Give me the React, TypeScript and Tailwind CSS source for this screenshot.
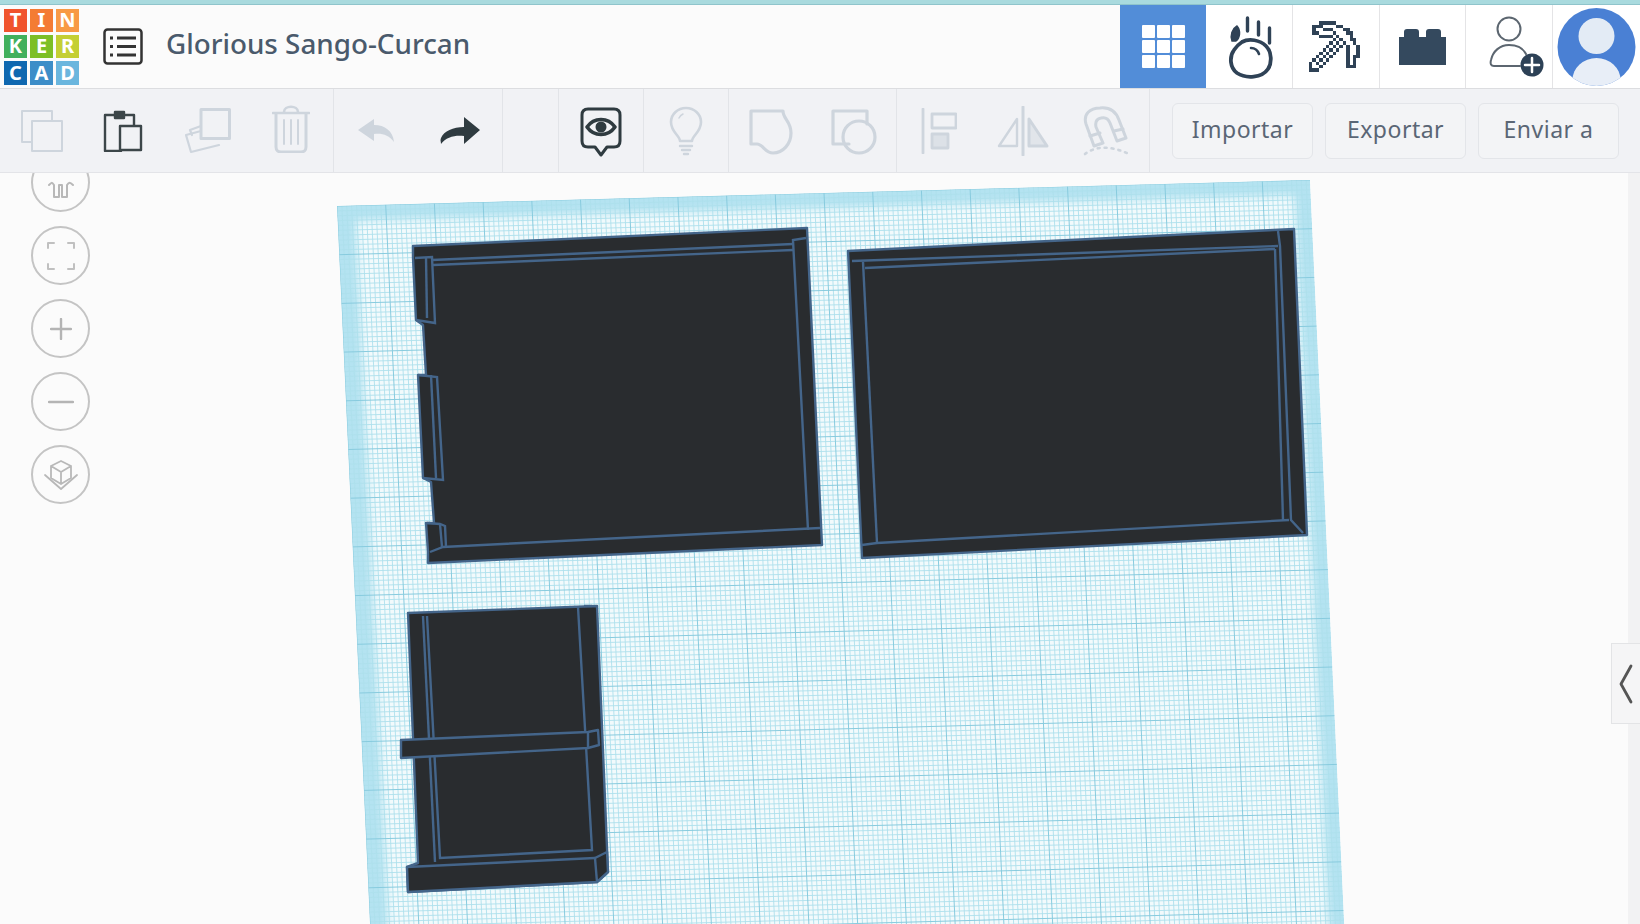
import type { ReactNode } from "react"

const gray = "#ced5dd"
const dark = "#2f3b40"

const logo = [
  ["T", "bg-[#f0532c]"],
  ["I", "bg-[#f47c33]"],
  ["N", "bg-[#f89a45]"],
  ["K", "bg-[#41b05c]"],
  ["E", "bg-[#7dbf26]"],
  ["R", "bg-[#c4cf33]"],
  ["C", "bg-[#0f68b0]"],
  ["A", "bg-[#3d8ec8]"],
  ["D", "bg-[#6ab6de]"],
]

const pickaxe = [
  "...#####........",
  ".###....##......",
  ".#..###...##....",
  ".##....#...##...",
  "...####.#...#...",
  ".......#.#..##..",
  "......#.#.#..#..",
  ".....#.#.#.#..#.",
  "....#.#.#..#..#.",
  "...#.#.#...#..#.",
  "..#.#.#....#.##.",
  ".#.#.#.....#.#..",
  "#.#.#......#.#..",
  "#..#.......###..",
  "###.............",
]

function Icon({ w, h, children, color = gray, sw = 2.5 }: { w: number; h: number; children: ReactNode; color?: string; sw?: number }) {
  return (
    <svg width={w} height={h} viewBox={`0 0 ${w} ${h}`} fill="none" stroke={color} strokeWidth={sw} strokeLinecap="round" strokeLinejoin="round">
      {children}
    </svg>
  )
}

function ToolButton({ children }: { children: ReactNode }) {
  return <button className="flex h-full flex-1 items-center justify-center">{children}</button>
}

function NavCircle({ children }: { children: ReactNode }) {
  return (
    <button className="flex h-[59px] w-[59px] items-center justify-center rounded-full border-2 border-[#c4c4c4] bg-[#fbfbfb]">
      {children}
    </button>
  )
}

function ActionButton({ label }: { label: string }) {
  return (
    <button className="h-[56px] w-[141px] rounded-md border border-[#e3e5e9] bg-[#f3f4f6] pb-[3px] text-[23px] tracking-[0.5px] text-[#5a6675]">
      {label}
    </button>
  )
}

function Workplane() {
  // plate is an affine quad: origin, width vector, height vector
  const ox = 337
  const oy = 206
  const ux = 1
  const uy = -26 / 973
  const vx = 0.046
  const vy = 1
  const pt = (a: number, b: number) => `${ox + ux * a + vx * b},${oy + uy * a + vy * b}`
  const W = 973
  const H = 780
  const minor: string[] = []
  const major: string[] = []
  const step = 4.87
  for (let i = 0; i * step <= W; i++) {
    const d = `M${pt(i * step, 0)}L${pt(i * step, H)}`
    if (i % 10 === 0) major.push(d)
    else minor.push(d)
  }
  for (let i = 0; i * step <= H; i++) {
    const d = `M${pt(0, i * step)}L${pt(W, i * step)}`
    if (i % 10 === 0) major.push(d)
    else minor.push(d)
  }
  const body = { fill: "#292c2f", stroke: "#44658a", strokeWidth: 2.4, strokeLinejoin: "round" as const }
  const line = { fill: "none", stroke: "#44658a", strokeWidth: 2.4 }

  return (
    <svg className="absolute inset-0 blur-[0.6px]" width="1640" height="751" viewBox="0 173 1640 751">
      <defs>
        <clipPath id="plate-clip">
          <polygon points={`${pt(0, 0)} ${pt(W, 0)} ${pt(W, H)} ${pt(0, H)}`} />
        </clipPath>
      </defs>
      <g clipPath="url(#plate-clip)">
        <polygon points={`${pt(0, 0)} ${pt(W, 0)} ${pt(W, H)} ${pt(0, H)}`} fill="#b4e3f1" />
        <polygon className="blur-[4px]" points={`${pt(18, 15)} ${pt(W - 16, 15)} ${pt(W - 16, H)} ${pt(18, H)}`} fill="#f2fafc" />
        <path d={minor.join("")} stroke="#aee0ec" strokeWidth="0.9" fill="none" />
        <path d={major.join("")} stroke="#88cbde" strokeWidth="1" fill="none" />
      </g>

      {/* tray with tabs */}
      <polygon {...body} points="413,246 807,228 822,545 428,563 428,552 426,523 434,523 431,482 423,478 418,375 426,375 423,325 416,320 413,258" />
      <line {...line} x1="432" y1="260" x2="793" y2="244" />
      <line {...line} x1="433" y1="265" x2="793" y2="250" />
      <polyline {...line} points="806,238 793,240 808,530" />
      <polyline {...line} points="415,258 432,257 435,323 416,320" />
      <line {...line} x1="426" y1="257" x2="427" y2="318" />
      <polyline {...line} points="418,375 437,377 443,480 423,478" />
      <line {...line} x1="431" y1="375" x2="436" y2="478" />
      <polyline {...line} points="427,523 440,524 445,526 446,547" />
      <line {...line} x1="440" y1="524" x2="442" y2="547" />
      <polyline {...line} points="430,552 443,547 820,528" />

      {/* lid */}
      <polygon {...body} points="848,251 1294,229 1307,535 862,558" />
      <line {...line} x1="852" y1="261" x2="1278" y2="246" />
      <line {...line} x1="865" y1="268" x2="1275" y2="249" />
      <line {...line} x1="863" y1="262" x2="877" y2="543" />
      <polyline {...line} points="862,545 877,543 1289,520" />
      <polyline {...line} points="1275,249 1283,520" />
      <polyline {...line} points="1278,231 1280,246 1291,520 1303,533" />

      {/* small part */}
      <polygon {...body} points="408,613 597,606 608,872 597,882 408,892 407,867 418,863" />
      <polyline {...line} points="423,616 435,862" />
      <polyline {...line} points="427,616 440,858 592,850 578,607" />
      <polyline {...line} points="584,606 592,606" />
      <polygon {...body} points="401,740 588,732 598,730 599,745 588,748 401,758" />
      <line {...line} x1="588" y1="732" x2="588" y2="748" />
      <polygon {...body} points="407,867 595,858 607,852 608,872 597,882 408,892" />
      <polyline {...line} points="595,858 597,882" />
    </svg>
  )
}

export default function App() {
  return (
    <div className="flex h-screen w-full flex-col overflow-hidden bg-[#fbfbfb] font-['Noto_Sans',sans-serif]">
      <div className="h-[5px] shrink-0 border-b border-[#8fc4cb] bg-[#a9dade]" />

      {/* Header */}
      <header className="flex h-[84px] shrink-0 items-center border-b border-[#dcdde0] bg-[#fbfbfb]">
        <div className="ml-[4px] grid grid-cols-[23px_23px_23px] grid-rows-[23px_23px_24px] gap-[3px]">
          {logo.map(([letter, bg]) => (
            <div key={letter} className={`flex items-center justify-center text-[20px] leading-none font-bold text-white ${bg}`}>
              {letter}
            </div>
          ))}
        </div>
        <svg className="ml-[24px]" width="40" height="37" viewBox="0 0 40 37" fill="none" stroke="#333" strokeWidth="2.5">
          <rect x="1.5" y="1.5" width="37" height="34" rx="3" />
          <path d="M14 10h19M14 18.5h19M14 27h19M7 10h3M7 18.5h3M7 27h3" strokeWidth="3" />
        </svg>
        <h1 className="ml-[23px] pb-[6px] text-[27.8px] leading-none font-medium text-[#4a5a6c]">Glorious Sango-Curcan</h1>

        <div className="ml-auto flex h-full">
          <button className="flex h-full w-[86px] items-center justify-center bg-[#528dd8]">
            <div className="grid grid-cols-3 gap-[2px]">
              {Array.from({ length: 9 }).map((_, i) => (
                <div key={i} className="h-[13px] w-[13px] rounded-[1px] bg-white" />
              ))}
            </div>
          </button>
          <button className="flex h-full w-[87px] items-center justify-center border-r border-[#e4e4e6] bg-white">
            <Icon w={50} h={64} color="#2f4256" sw={3.8}>
              <path d="M18 27C25 23 36 25 42 31C48 37 48 48 44 54C38 63 22 64 13 58C6 53 5 42 10 35C12 32 15 29 18 27Z" />
              <path d="M27 33c4 0 7 3 8 6" strokeWidth="2.6" />
              <path d="M23.5 3v13M34.5 7v13M45.5 13v15" strokeWidth="3.4" />
              <path d="M8 26c-2-6 0-12 5-15 4 5 3 12-1 15Z" fill="#2f4256" strokeWidth="1.5" />
            </Icon>
          </button>
          <button className="flex h-full w-[87px] items-center justify-center border-r border-[#e4e4e6] bg-white">
            <svg width="54" height="51" viewBox="0 0 16 15" fill="#2f4256" shapeRendering="crispEdges">
              {pickaxe.map((row, y) =>
                row.split("").map((c, x) => (c === "#" ? <rect key={`${x}-${y}`} x={x} y={y} width="1" height="1" /> : null)),
              )}
            </svg>
          </button>
          <button className="flex h-full w-[86px] items-center justify-center border-r border-[#e4e4e6] bg-white">
            <svg width="47" height="36" viewBox="0 0 47 36" fill="#34495e">
              <path d="M0 8h5V3a3 3 0 0 1 3-3h9a3 3 0 0 1 3 3v5h7V3a3 3 0 0 1 3-3h9a3 3 0 0 1 3 3v5h5v28H0Z" />
            </svg>
          </button>
          <button className="flex h-full w-[87px] items-center justify-center border-r border-[#e4e4e6] bg-white pl-[16px]">
            <Icon w={58} h={64} color="#5c6670" sw={2}>
              <circle cx="21" cy="14" r="11.5" />
              <path d="M6 51c-3 0-4-2-3-6 2-9 9-15 18-15s14 3 17 9M6 51h26" />
              <circle cx="44" cy="50" r="11.5" fill="#2d4156" stroke="none" />
              <path d="M44 43v14M37 50h14" stroke="#fff" strokeWidth="2.5" />
            </Icon>
          </button>
          <button className="flex h-full w-[87px] items-start justify-center bg-white pt-[2px]">
            <svg width="79" height="80" viewBox="0 0 79 80">
              <defs>
                <clipPath id="avatar-clip">
                  <circle cx="39.5" cy="40" r="39" />
                </clipPath>
              </defs>
              <circle cx="39.5" cy="40" r="39" fill="#4a80d4" />
              <circle cx="39.5" cy="29" r="18" fill="#e3ebf5" />
              <ellipse cx="39.5" cy="73" rx="24" ry="22" fill="#e8eef7" clipPath="url(#avatar-clip)" />
            </svg>
          </button>
        </div>
      </header>

      {/* Toolbar */}
      <div className="flex h-[84px] shrink-0 items-center border-b border-[#e3e4e8] bg-[#f1f2f5]">
        <div className="flex h-full w-[334px] border-r border-[#e2e4e8]">
          <ToolButton>
            <Icon w={42} h={42} sw={2}>
              <rect x="1" y="1" width="30" height="31" />
              <rect x="11" y="11" width="30" height="30" fill="#f1f2f5" />
            </Icon>
          </ToolButton>
          <ToolButton>
            <Icon w={43} h={42} color="#3c4649" sw={2.4}>
              <path d="M11 5H2v36h16M22 5h9v11" />
              <rect x="12" y="2" width="9" height="6" fill="#3c4649" />
              <rect x="17" y="16" width="21" height="24" fill="#f1f2f5" />
            </Icon>
          </ToolButton>
          <ToolButton>
            <Icon w={46} h={46} sw={2.2}>
              <path d="M16 23 1 27l5 17 28-7" />
              <path d="M16 18 5 22l2 5" />
              <rect x="16" y="1.5" width="28.5" height="29" fill="#f1f2f5" strokeWidth="3" />
            </Icon>
          </ToolButton>
          <ToolButton>
            <div className="mb-[4px]">
              <Icon w={38} h={48} sw={2.6}>
                <path d="M1 8h36M12 7c0-7 14-7 14 0" />
                <path d="M4 9v33c0 3 2 5 5 5h20c3 0 5-2 5-5V9" strokeWidth="3" />
                <path d="M12 15v24M19 15v24M26 15v24" strokeWidth="2" />
              </Icon>
            </div>
          </ToolButton>
        </div>
        <div className="flex h-full w-[169px] border-r border-[#e2e4e8]">
          <ToolButton>
            <svg width="37" height="24" viewBox="0 0 37 24" fill={gray}>
              <path d="M16 0 0 11l16 11v-7c8-1 15 1 20 8-1-11-9-17-20-17Z" />
            </svg>
          </ToolButton>
          <ToolButton>
            <svg width="40" height="28" viewBox="0 0 40 28" fill={dark}>
              <path d="M24 0 40 13 24 27v-8C15 18 6 20 1 27c0-3-1-3 0-6 3-7 12-11 23-11Z" />
            </svg>
          </ToolButton>
        </div>
        <div className="h-full w-[56px] border-r border-[#e2e4e8]" />
        <div className="flex h-full w-[85px] border-r border-[#e2e4e8]">
          <ToolButton>
            <div className="mt-[3px]">
              <Icon w={42} h={50} color={dark} sw={3}>
                <path d="M8 2h26c4 0 6 2 6 6v26c0 4-2 6-6 6h-7l-6 8-6-8H8c-4 0-6-2-6-6V8c0-4 2-6 6-6Z" />
                <path d="M7 20c7-10 21-10 28 0-7 10-21 10-28 0Z" strokeWidth="3.6" />
                <circle cx="21" cy="20" r="4" fill={dark} />
              </Icon>
            </div>
          </ToolButton>
        </div>
        <div className="flex h-full w-[85px] border-r border-[#e2e4e8]">
          <ToolButton>
            <Icon w={34} h={50} sw={2.6}>
              <path d="M11 35c0-5-9-9-9-19C2 8 9 2 17 2s15 6 15 14c0 10-9 14-9 19Z" />
              <path d="M11 40h12M13 44h8M15 48h4" strokeWidth="2.4" />
              <path d="M10 12c1-2 2-3 4-4" strokeWidth="1.5" />
            </Icon>
          </ToolButton>
        </div>
        <div className="flex h-full w-[168px] border-r border-[#e2e4e8]">
          <ToolButton>
            <div className="mt-[3px]">
              <Icon w={44} h={46} sw={3.2}>
                <path d="M2 2h32c0 8 8 10 8 22 0 11-8 20-18 20-8 0-10-9-16-9H2Z" />
              </Icon>
            </div>
          </ToolButton>
          <ToolButton>
            <div className="mt-[3px]">
              <Icon w={46} h={46} sw={3.2}>
                <path d="M18 35H2V2h34v13" />
                <circle cx="28" cy="28" r="16" />
              </Icon>
            </div>
          </ToolButton>
        </div>
        <div className="flex h-full w-[253px] border-r border-[#e2e4e8]">
          <ToolButton>
            <Icon w={36} h={46} sw={2.8}>
              <path d="M2 1v44" />
              <rect x="11" y="6" width="24" height="14" />
              <rect x="11" y="26" width="16" height="14" fill={gray} fillOpacity="0.6" />
            </Icon>
          </ToolButton>
          <ToolButton>
            <Icon w={52} h={50} sw={2.4}>
              <path d="M26 1v48" strokeWidth="3" />
              <path d="M20 13v27H2Z" />
              <path d="M32 13v27h18Z" fill={gray} fillOpacity="0.45" strokeWidth="3" />
            </Icon>
          </ToolButton>
          <ToolButton>
            <Icon w={51} h={50} sw={3}>
              <path d="M12 40 4 18C1 8 8 2 18 2C28 1 34 6 37 14L44 32 35 35 28 17C26 12 23 11 19 12C14 13 13 16 14 21L21 37Z" />
              <path d="M8 30l10-3M32 25l9-2" />
              <path d="M3 48C12 41 27 38 49 49" strokeWidth="2.6" strokeDasharray="2 5" />
            </Icon>
          </ToolButton>
        </div>
        <div className="flex flex-1 items-center gap-[12px] pl-[22px]">
          <ActionButton label="Importar" />
          <ActionButton label="Exportar" />
          <ActionButton label="Enviar a" />
        </div>
      </div>

      {/* Viewport */}
      <main className="relative flex-1 overflow-hidden">
        <Workplane />

        <div className="absolute top-[-20px] left-[31px] flex flex-col gap-[14px]">
          <NavCircle>
            <div className="mt-[14px]">
              <Icon w={26} h={20} color="#b8b8b8" sw={2}>
                <path d="M1 5c3-3 3-3 5 0v12h5V5h3v12h5V5c2-3 3-3 6 0" />
              </Icon>
            </div>
          </NavCircle>
          <NavCircle>
            <Icon w={28} h={28} color="#c0c0c0" sw={2}>
              <path d="M1 6V1h6M21 1h6v5M27 22v5h-6M7 27H1v-5" />
            </Icon>
          </NavCircle>
          <NavCircle>
            <Icon w={22} h={22} color="#b4b4b4" sw={2.4}>
              <path d="M11 1v20M1 11h20" />
            </Icon>
          </NavCircle>
          <NavCircle>
            <Icon w={26} h={6} color="#b4b4b4" sw={2.4}>
              <path d="M1 3h24" />
            </Icon>
          </NavCircle>
          <NavCircle>
            <Icon w={34} h={30} color="#b8b8b8" sw={1.8}>
              <path d="M17 1l10 5v12l-10 6-10-6V6ZM7 6l10 6 10-6M17 12v12" />
              <path d="M1 15l16 14 16-14" />
            </Icon>
          </NavCircle>
        </div>

        {/* Shape panel strip */}
        <div className="absolute top-0 right-0 bottom-0 w-[12px] bg-[#f2f2f3]" />
        <button className="absolute top-[470px] right-0 flex h-[81px] w-[29px] items-center justify-center border border-r-0 border-[#e3e4e6] bg-[#f5f5f6]">
          <Icon w={14} h={40} color="#555" sw={2.8}>
            <path d="M12 2 2 20l10 18" />
          </Icon>
        </button>
      </main>
    </div>
  )
}
